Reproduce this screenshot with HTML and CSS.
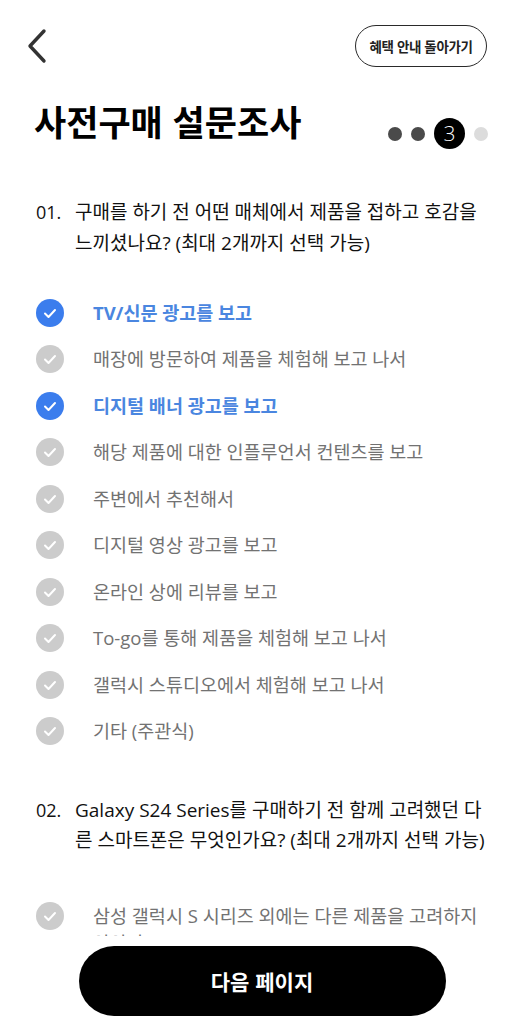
FILE: index.html
```html
<!DOCTYPE html>
<html lang="ko">
<head>
<meta charset="utf-8">
<title>사전구매 설문조사</title>
<link rel="stylesheet" href="styles.css">
</head>
<body>
<div class="page">
  <main class="content">
    <header class="topbar">
      <button class="back" aria-label="뒤로">
        <svg width="22" height="36" viewBox="0 0 22 36"><polyline points="18,3 4,18 18,33" fill="none" stroke="#333" stroke-width="3.4" stroke-linecap="round" stroke-linejoin="round"/></svg>
      </button>
      <button class="pill">혜택 안내 돌아가기</button>
    </header>

    <div class="title-row">
      <h1 class="title">사전구매 설문조사</h1>
      <div class="steps">
        <span class="dot done"></span>
        <span class="dot done"></span>
        <span class="dot current">3</span>
        <span class="dot todo"></span>
      </div>
    </div>

    <section class="question q1">
      <div class="q-head"><span class="q-num">01.</span><p class="q-text">구매를 하기 전 어떤 매체에서 제품을 접하고 호감을<br>느끼셨나요? (최대 2개까지 선택 가능)</p></div>
      <ul class="options">
        <li class="option selected"><span class="check"><svg viewBox="0 0 28 28"><polyline points="9,14.5 12.5,18 19,11"/></svg></span><span class="label">TV/신문 광고를 보고</span></li>
        <li class="option"><span class="check"><svg viewBox="0 0 28 28"><polyline points="9,14.5 12.5,18 19,11"/></svg></span><span class="label">매장에 방문하여 제품을 체험해 보고 나서</span></li>
        <li class="option selected"><span class="check"><svg viewBox="0 0 28 28"><polyline points="9,14.5 12.5,18 19,11"/></svg></span><span class="label">디지털 배너 광고를 보고</span></li>
        <li class="option"><span class="check"><svg viewBox="0 0 28 28"><polyline points="9,14.5 12.5,18 19,11"/></svg></span><span class="label">해당 제품에 대한 인플루언서 컨텐츠를 보고</span></li>
        <li class="option"><span class="check"><svg viewBox="0 0 28 28"><polyline points="9,14.5 12.5,18 19,11"/></svg></span><span class="label">주변에서 추천해서</span></li>
        <li class="option"><span class="check"><svg viewBox="0 0 28 28"><polyline points="9,14.5 12.5,18 19,11"/></svg></span><span class="label">디지털 영상 광고를 보고</span></li>
        <li class="option"><span class="check"><svg viewBox="0 0 28 28"><polyline points="9,14.5 12.5,18 19,11"/></svg></span><span class="label">온라인 상에 리뷰를 보고</span></li>
        <li class="option"><span class="check"><svg viewBox="0 0 28 28"><polyline points="9,14.5 12.5,18 19,11"/></svg></span><span class="label">To-go를 통해 제품을 체험해 보고 나서</span></li>
        <li class="option"><span class="check"><svg viewBox="0 0 28 28"><polyline points="9,14.5 12.5,18 19,11"/></svg></span><span class="label">갤럭시 스튜디오에서 체험해 보고 나서</span></li>
        <li class="option"><span class="check"><svg viewBox="0 0 28 28"><polyline points="9,14.5 12.5,18 19,11"/></svg></span><span class="label">기타 (주관식)</span></li>
      </ul>
    </section>

    <section class="question q2">
      <div class="q-head"><span class="q-num">02.</span><p class="q-text">Galaxy S24 Series를 구매하기 전 함께 고려했던 다<br>른 스마트폰은 무엇인가요? (최대 2개까지 선택 가능)</p></div>
      <ul class="options">
        <li class="option"><span class="check"><svg viewBox="0 0 28 28"><polyline points="9,14.5 12.5,18 19,11"/></svg></span><span class="label">삼성 갤럭시 S 시리즈 외에는 다른 제품을 고려하지<br>않았다</span></li>
        <li class="option"><span class="check"><svg viewBox="0 0 28 28"><polyline points="9,14.5 12.5,18 19,11"/></svg></span><span class="label">애플 아이폰</span></li>
      </ul>
    </section>
  </main>

  <footer class="footer">
    <button class="next">다음 페이지</button>
  </footer>
</div>
</body>
</html>
```

FILE: styles.css
```css
* { box-sizing: border-box; }
html, body { margin: 0; padding: 0; background: #fff; }
body {
  font-family: "Open Sans", "Noto Sans CJK KR", sans-serif;
  color: #111;
}
.page {
  height: 100vh;
  display: flex;
  flex-direction: column;
  overflow: hidden;
}
.content {
  flex: 1;
  min-height: 0;
  overflow: hidden;
}
button { font-family: inherit; cursor: pointer; }

.topbar {
  display: flex;
  justify-content: space-between;
  align-items: center;
  margin-top: 25px;
  height: 42px;
  padding: 0 37px 0 26px;
}
.back {
  border: 0;
  background: none;
  padding: 0;
  width: 22px;
  height: 36px;
  display: flex;
}
.pill {
  height: 42px;
  width: 132px;
  border: 1.5px solid #2a2a2a;
  border-radius: 21px;
  background: #fff;
  font-family: "Noto Sans CJK KR", sans-serif;
  font-weight: 700;
  font-size: 13.5px;
  color: #222;
  padding: 0;
  letter-spacing: -0.4px;
}

.title-row {
  display: flex;
  justify-content: space-between;
  align-items: center;
  margin-top: 25px;
  padding: 0 36px 0 34px;
}
.title {
  margin: 0;
  font-family: "Noto Sans CJK KR", sans-serif;
  font-size: 35px;
  font-weight: 700;
  line-height: 42px;
  color: #000;
}
.steps {
  display: flex;
  align-items: center;
  gap: 9px;
  margin-top: 26px;
}
.dot {
  width: 14px;
  height: 14px;
  border-radius: 50%;
  display: block;
}
.dot.done { background: #4a4a4a; }
.dot.todo { background: #dcdcdc; }
.dot.current {
  width: 31px;
  height: 31px;
  background: #000;
  color: #fff;
  font-family: "Open Sans", sans-serif;
  font-weight: 300;
  font-size: 21px;
  line-height: 31px;
  text-align: center;
}

.question { padding: 0 30px 0 36px; }
.q1 { margin-top: 48px; }
.q-head {
  display: grid;
  grid-template-columns: 39px 1fr;
  font-size: 19px;
  line-height: 30.5px;
  color: #111;
}
.q-num { font-family: "Open Sans", "Noto Sans CJK KR", sans-serif; font-size: 18px; }
.q-text { margin: 0; white-space: nowrap; }

.options {
  list-style: none;
  margin: 31.5px 0 0;
  padding: 0;
}
.option {
  display: flex;
  align-items: flex-start;
  gap: 29px;
  padding: 9.25px 0;
  font-size: 18.5px;
  line-height: 28px;
  color: #727272;
}
.check {
  flex: none;
  width: 28px;
  height: 28px;
  border-radius: 50%;
  background: #cccccc;
  display: flex;
}
.check svg {
  width: 28px;
  height: 28px;
  fill: none;
  stroke: #fff;
  stroke-width: 2;
  stroke-linecap: round;
  stroke-linejoin: round;
}
.option.selected { color: #4a86e0; font-weight: 700; }
.option.selected .check { background: #3b7ded; }
.label { white-space: nowrap; }

.q2 { margin-top: 40px; }
.q2 .options { margin-top: 37px; }
.q2 .option { line-height: 27px; }
.q2 .option .check { margin-top: 0; }

.footer {
  flex: none;
  height: 88px;
  background: #fff;
  display: flex;
  justify-content: center;
  padding-top: 10px;
}
.next {
  width: 367px;
  height: 70px;
  border: 0;
  border-radius: 35px;
  background: #000;
  color: #fff;
  font-family: "Noto Sans CJK KR", sans-serif;
  font-size: 21px;
  font-weight: 700;
  padding: 0;
}
```
